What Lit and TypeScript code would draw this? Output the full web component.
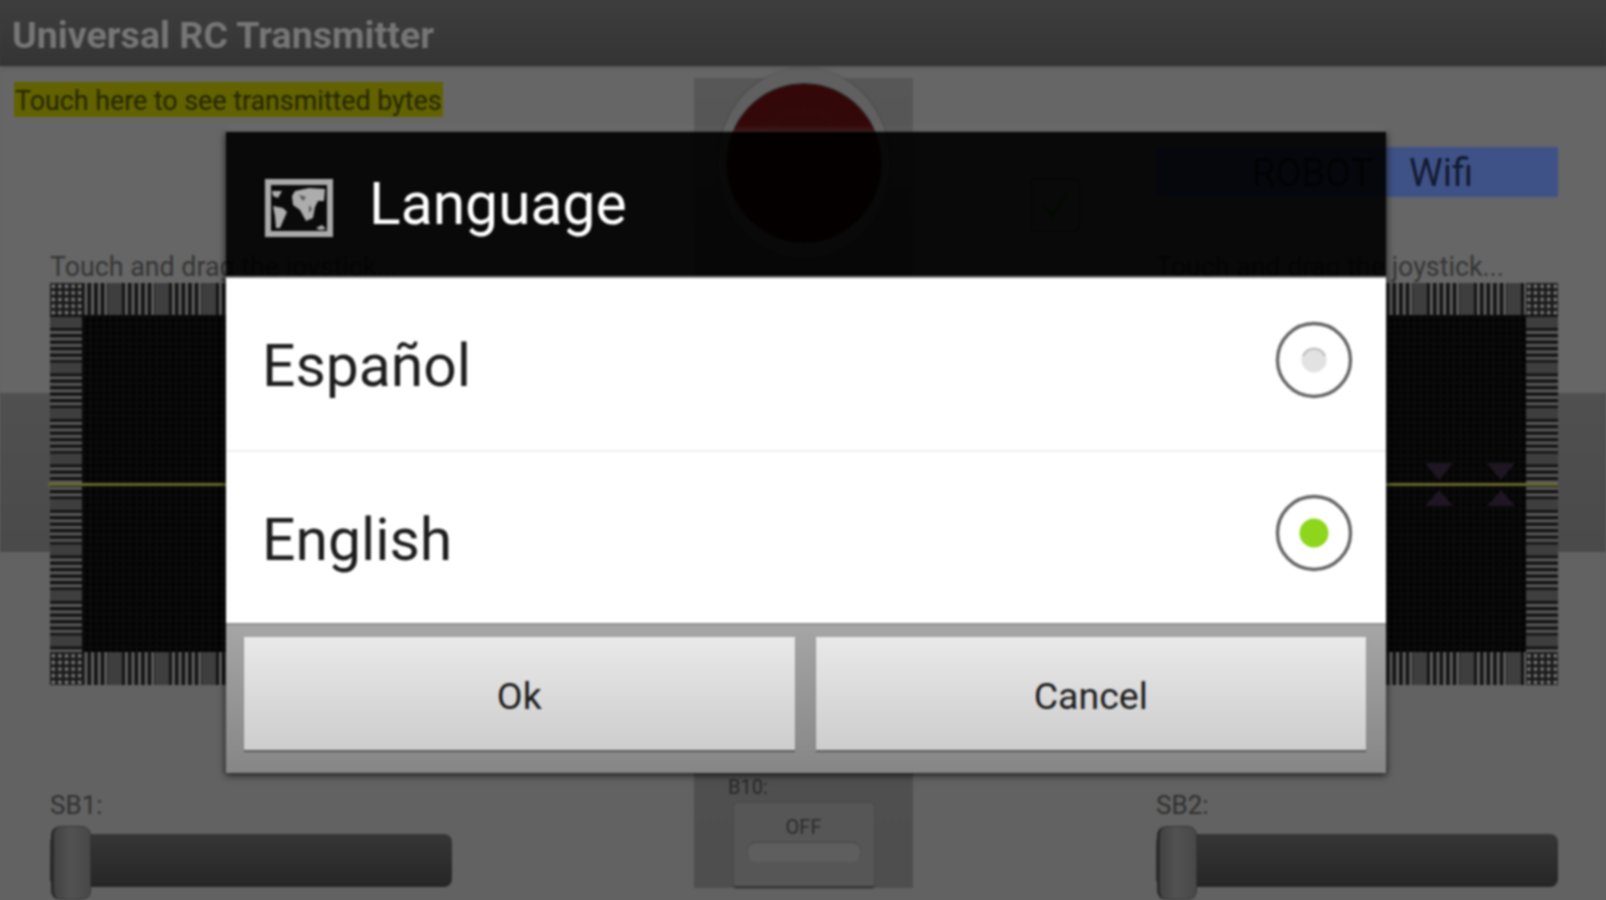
import { LitElement, html, svg, css } from "lit";
import { customElement } from "lit/decorators.js";

const V_LINES = [17, 23.6, 30.2, 36.8, 43.4];
const H_LINES = [14, 20.5, 27, 33.5, 40];

@customElement("app-root")
export class AppRoot extends LitElement {
  static styles = css`
    :host { display: block; width: 1606px; height: 900px; overflow: hidden; background: linear-gradient(#3e3e3e 66px, #646464 66px); font-family: Roboto, "Liberation Sans", sans-serif; }
    .screen { position: relative; width: 1606px; height: 900px; overflow: hidden; filter: blur(0.9px); }
    .appbar { height: 66px; box-sizing: border-box; padding: 4px 0 0 12px; display: flex; align-items: center; background: linear-gradient(#3e3e3e, #343434); color: #767676; font-size: 37.6px; font-weight: 700; box-shadow: 0 2px 3px rgba(0,0,0,.15); position: relative; }
    .content { height: 834px; box-sizing: border-box; padding: 0 48px 0 50px; display: grid; grid-template-columns: 402px 242px 219px 243px 402px;
      background: linear-gradient(#666666 327px, #505050 327px, #4a4a4a 486px, #626262 486px); }
    .col { display: flex; flex-direction: column; min-width: 0; }
    .top { height: 217px; display: flex; flex-direction: column; justify-content: space-between; }
    .hint { align-self: flex-start; margin: 16px 0 0 -36px; height: 35px; line-height: 39px; padding: 0 1px; background: #626200; color: #262600; font-size: 26.8px; white-space: nowrap; }
    .wifi { margin-top: 81px; height: 50px; background: #3f5287; color: #121a30; font-size: 38px; line-height: 52px; text-align: center; padding-left: 11px; word-spacing: 27px; box-sizing: border-box; }
    .label { height: 32px; line-height: 32px; font-size: 26.8px; color: #353535; white-space: nowrap; }
    .pad { position: relative; width: 402px; height: 402px; }
    .pad svg { display: block; }
    .axis { position: absolute; left: -2px; right: 0; top: 200px; height: 3px; background: #66662c; }
    .tri { position: absolute; top: 180px; }
    .tri.a { left: 269px; }
    .tri.b { left: 331px; }
    .sb-label { margin-top: 105px; height: 30px; line-height: 30px; font-size: 26px; color: #303030; }
    .slider { position: relative; margin-top: 6px; height: 74px; }
    .track { margin-top: 8px; height: 53px; border-radius: 8px; background: linear-gradient(#363636, #262626); }
    .thumb { position: absolute; left: 1px; top: 0; width: 40px; height: 74px; box-sizing: border-box; border-radius: 9px; background: linear-gradient(90deg, #424242, #525252 45%, #484848); border: 1px solid #363636; border-left: 3px solid #2a2a2a; }
    .center { margin-top: 12px; height: 810px; background: linear-gradient(#575757, #4e4e4e); align-items: center; }
    .ring { margin-top: -10px; width: 172px; height: 190px; border-radius: 50%; background: #606060; display: flex; align-items: center; justify-content: center; box-shadow: 0 0 3px rgba(0,0,0,.25); }
    .red { width: 154px; height: 158px; border-radius: 50%; background: radial-gradient(#300a0a, #350808 80%, #3e0303); box-shadow: 0 0 0 1px #282828; }
    .b10 { margin-top: auto; align-self: flex-start; margin-left: 34px; height: 24px; line-height: 24px; font-size: 20px; color: #282828; }
    .toggle { margin-top: 4px; width: 140px; height: 85px; box-sizing: border-box; border-radius: 3px; background: #565656; border-bottom: 2px solid #363636; box-shadow: 0 0 0 1px #484848; display: flex; flex-direction: column; align-items: center; padding-top: 11px; }
    .off { height: 26px; line-height: 26px; font-size: 20px; color: #2c2c2c; }
    .ind { margin-top: 3px; width: 112px; height: 19px; border-radius: 8px; background: #5e5e5e; box-shadow: 0 -1px 1px #484848; }
    .phone { margin: 89px 0 0 92px; width: 98px; height: 98px; border: 1px solid #5e5e5e; border-radius: 4px; display: flex; align-items: center; justify-content: center; }
    .dialog { position: absolute; left: 226px; top: 132px; width: 1160px; height: 641px; display: flex; flex-direction: column; box-shadow: 0 -4px 5px rgba(255,255,255,.1), 0 3px 7px rgba(0,0,0,.5), -2px 0 5px rgba(0,0,0,.25), 2px 0 5px rgba(0,0,0,.25); }
    .head { height: 144px; display: flex; align-items: center; background: rgba(0,0,0,.91); border-bottom: 2px solid #7c7c7c; flex: none; box-sizing: content-box; }
    .head svg { margin: 8px 36px 0 39px; display: block; }
    .head h1 { margin: 0; color: #fff; font-size: 58.8px; font-weight: 400; line-height: 140px; }
    .list { flex: 1; background: #fff; display: flex; flex-direction: column; }
    .row { flex: 1; display: flex; align-items: center; justify-content: space-between; padding: 0 33px 0 36px; font-size: 58.8px; color: #1e1e1e; }
    .row + .row { border-top: 2px solid #f0f0f0; }
    .row span { position: relative; top: 2px; }
    .row svg { display: block; position: relative; top: -4px; }
    .foot { height: 150px; box-sizing: border-box; flex: none; padding: 14px 20px 23px 18px; display: flex; gap: 21px; background: linear-gradient(#a6a6a6, #868686); box-shadow: inset 0 2px 1px #8f8f8f; }
    .btn { flex: 1; border: 0; background: linear-gradient(#e9e9e9, #cdcdcd); color: #1c1c1c; font: 400 37.5px Roboto, "Liberation Sans", sans-serif; box-shadow: 0 2px 1px #5e5e5e; padding: 4px 0 0; }
  `;

  private pad(id: string, ox: number, mirror: boolean) {
    const body = 402;
    const t = 32;
    return html`<svg width="402" height="402" viewBox="0 0 402 402">
      <defs>
        <pattern id="${id}v" width="47" height="402" x="${ox}" patternUnits="userSpaceOnUse">
          <rect width="47" height="402" fill="#141414"></rect>
          <rect width="14" height="402" fill="#3e3e3e"></rect>
          ${V_LINES.map((x) => svg`<rect x="${x}" width="2.8" height="402" fill="#626262"></rect>`)}
        </pattern>
        <pattern id="${id}h" width="402" height="45.5" y="34" patternUnits="userSpaceOnUse">
          <rect width="402" height="45.5" fill="#121212"></rect>
          <rect width="402" height="11" fill="#3e3e3e"></rect>
          ${H_LINES.map((y) => svg`<rect y="${y}" width="402" height="2.8" fill="#606060"></rect>`)}
        </pattern>
        <pattern id="${id}d" width="6.6" height="6.6" patternUnits="userSpaceOnUse">
          <rect width="6.6" height="6.6" fill="#1a1a1a"></rect>
          <rect x="1.6" y="1.6" width="3.4" height="3.4" fill="#7c7c7c"></rect>
        </pattern>
        <pattern id="${id}g" width="6.6" height="6.6" patternUnits="userSpaceOnUse">
          <rect width="6.6" height="6.6" fill="#040404"></rect>
          <rect width="1.6" height="6.6" fill="#0e0e0e"></rect>
          <rect width="6.6" height="1.6" fill="#0c0c0c"></rect>
        </pattern>
      </defs>
      <rect x="${t}" y="${t}" width="${body - t - t}" height="${body - t - t}" fill="url(#${id}g)"></rect>
      <rect x="${t}" y="0" width="${body - t - t}" height="${t}" fill="url(#${id}v)"></rect>
      <rect x="${t}" y="${body - t - 1}" width="${body - t - t}" height="${t + 1}" fill="url(#${id}v)"></rect>
      <rect x="0" y="${t}" width="${t}" height="${body - t - t}" fill="url(#${id}h)"></rect>
      <rect x="${body - t}" y="${t}" width="${t}" height="${body - t - t}" fill="url(#${id}h)"></rect>
      <rect x="0" y="0" width="${t}" height="${t}" fill="url(#${id}d)"></rect>
      <rect x="${body - t}" y="0" width="${t}" height="${t}" fill="url(#${id}d)"></rect>
      <rect x="0" y="${body - t - 1}" width="${t}" height="${t + 1}" fill="url(#${id}d)"></rect>
      <rect x="${body - t}" y="${body - t - 1}" width="${t}" height="${t + 1}" fill="url(#${id}d)"></rect>
    </svg>
    ${mirror ? this.triangles() : ""}
    <div class="axis"></div>`;
  }

  private triangles() {
    const tri = svg`<path d="M0 0H28L14 17Z" fill="#1e1622"></path><path d="M14 27L28 43H0Z" fill="#1e1622"></path>`;
    return html`<svg class="tri a" width="28" height="43" viewBox="0 0 28 43">${tri}</svg>
      <svg class="tri b" width="28" height="43" viewBox="0 0 28 43">${tri}</svg>`;
  }

  private radio(on: boolean) {
    return html`<svg width="78" height="78" viewBox="0 0 78 78">
      <circle cx="39" cy="39" r="36.5" fill="#fff" stroke="#666" stroke-width="3.4"></circle>
      ${on
        ? svg`<circle cx="39" cy="39" r="14.5" fill="#8ed61c"></circle>`
        : svg`<circle cx="39" cy="39" r="12.5" fill="#e2e2e2"></circle><path d="M28 35a12 12 0 0 1 22 0" fill="none" stroke="#bdbdbd" stroke-width="2"></path>`}
    </svg>`;
  }

  render() {
    return html`<div class="screen">
      <div class="appbar">Universal RC Transmitter</div>
      <div class="content">
        <div class="col">
          <div class="top">
            <div class="hint">Touch here to see transmitted bytes</div>
            <div class="label">Touch and drag the joystick...</div>
          </div>
          <div class="pad">${this.pad("l", 11, false)}</div>
          <div class="sb-label">SB1:</div>
          <div class="slider"><div class="track"></div><div class="thumb"></div></div>
        </div>
        <div></div>
        <div class="col center">
          <div class="ring"><div class="red"></div></div>
          <div class="b10">B10:</div>
          <div class="toggle"><div class="off">OFF</div><div class="ind"></div></div>
        </div>
        <div>
          <div class="phone">
            <svg width="50" height="54" viewBox="0 0 50 54">
              <rect x="1" y="1" width="48" height="52" rx="4" fill="none" stroke="#444" stroke-width="2"></rect>
              <path d="M13 27l9 11L37 14" fill="none" stroke="#3c6a24" stroke-width="5"></path>
            </svg>
          </div>
        </div>
        <div class="col">
          <div class="top">
            <div class="wifi">ROBOT Wifi</div>
            <div class="label">Touch and drag the joystick...</div>
          </div>
          <div class="pad">${this.pad("r", 22, true)}</div>
          <div class="sb-label">SB2:</div>
          <div class="slider"><div class="track"></div><div class="thumb"></div></div>
        </div>
      </div>
      <div class="dialog">
        <div class="head">
          <svg width="68" height="58" viewBox="0 0 68 58">
            <rect x="3" y="3" width="62" height="52" fill="#0a0a0a" stroke="#a9a9a9" stroke-width="6"></rect>
            <g fill="#adadad">
              <path d="M30 12L44 9L60 10L59 22L53 22L50 28L48 39L41 42L35 31L28 26L27 17Z"></path>
              <path d="M8 27L18 29L22 33L15 49L11 49L10 37Z"></path>
              <path d="M7 12L17 12L13 19L8 17Z"></path>
              <path d="M51 49L57 46L61 50L55 51Z"></path>
            </g>
            <path d="M34 16L41 18L38 22ZM44 26L47 30L44 34Z" fill="#555"></path>
          </svg>
          <h1>Language</h1>
        </div>
        <div class="list">
          <div class="row"><span>Español</span>${this.radio(false)}</div>
          <div class="row"><span>English</span>${this.radio(true)}</div>
        </div>
        <div class="foot">
          <button class="btn">Ok</button>
          <button class="btn">Cancel</button>
        </div>
      </div>
    </div>`;
  }
}
